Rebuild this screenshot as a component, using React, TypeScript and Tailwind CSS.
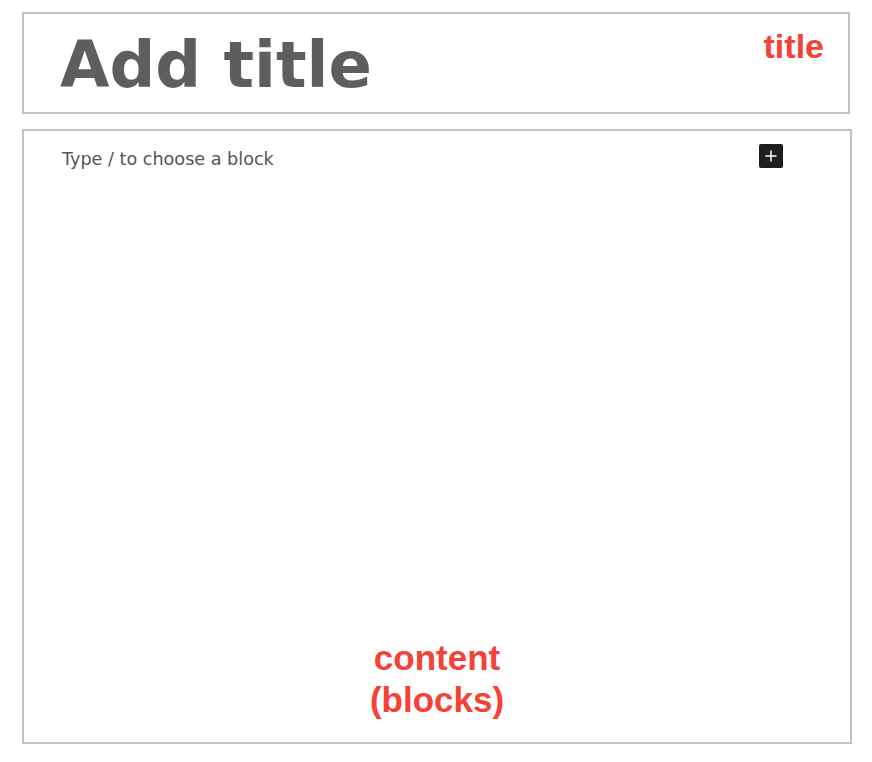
import React from "react";

export default function App() {
  return (
    <div className="w-[872px] h-[762px] bg-white relative">
      <div className="pt-[12px] pl-[22px] flex flex-col">
        <div className="w-[828px] h-[102px] border-2 border-[#c2c2c2] flex items-start justify-between">
          <div
            className="pl-[36px] pt-[11px] text-[64px] leading-[80px] font-bold text-[#5e5e5e]"
            style={{ fontFamily: '"DejaVu Sans", sans-serif' }}
          >
            Add title
          </div>
          <div
            className="pr-[24px] pt-[12px] text-[34px] leading-[40px] font-bold text-[#f44236]"
            style={{ fontFamily: '"Liberation Sans", Arial, sans-serif' }}
          >
            title
          </div>
        </div>
        <div className="mt-[15px] w-[830px] h-[615px] border-2 border-[#c2c2c2] flex flex-col">
          <div className="flex items-start justify-between pl-[38px] pr-[67px] pt-[13px]">
            <div
              className="text-[17.6px] leading-[30px] text-[#555555]"
              style={{ fontFamily: '"DejaVu Sans", sans-serif' }}
            >
              Type / to choose a block
            </div>
            <div className="w-[24px] h-[24px] bg-[#1e1e1e] rounded-[2px] flex items-center justify-center">
              <svg width="14" height="14" viewBox="0 0 14 14">
                <path d="M7 1.5v11M1.5 7h11" stroke="#ffffff" strokeWidth="1.5" />
              </svg>
            </div>
          </div>
          <div
            className="mt-auto mb-[21px] text-center text-[35px] leading-[42px] font-bold text-[#f44236]"
            style={{ fontFamily: '"Liberation Sans", Arial, sans-serif' }}
          >
            content
            <br />
            (blocks)
          </div>
        </div>
      </div>
    </div>
  );
}
